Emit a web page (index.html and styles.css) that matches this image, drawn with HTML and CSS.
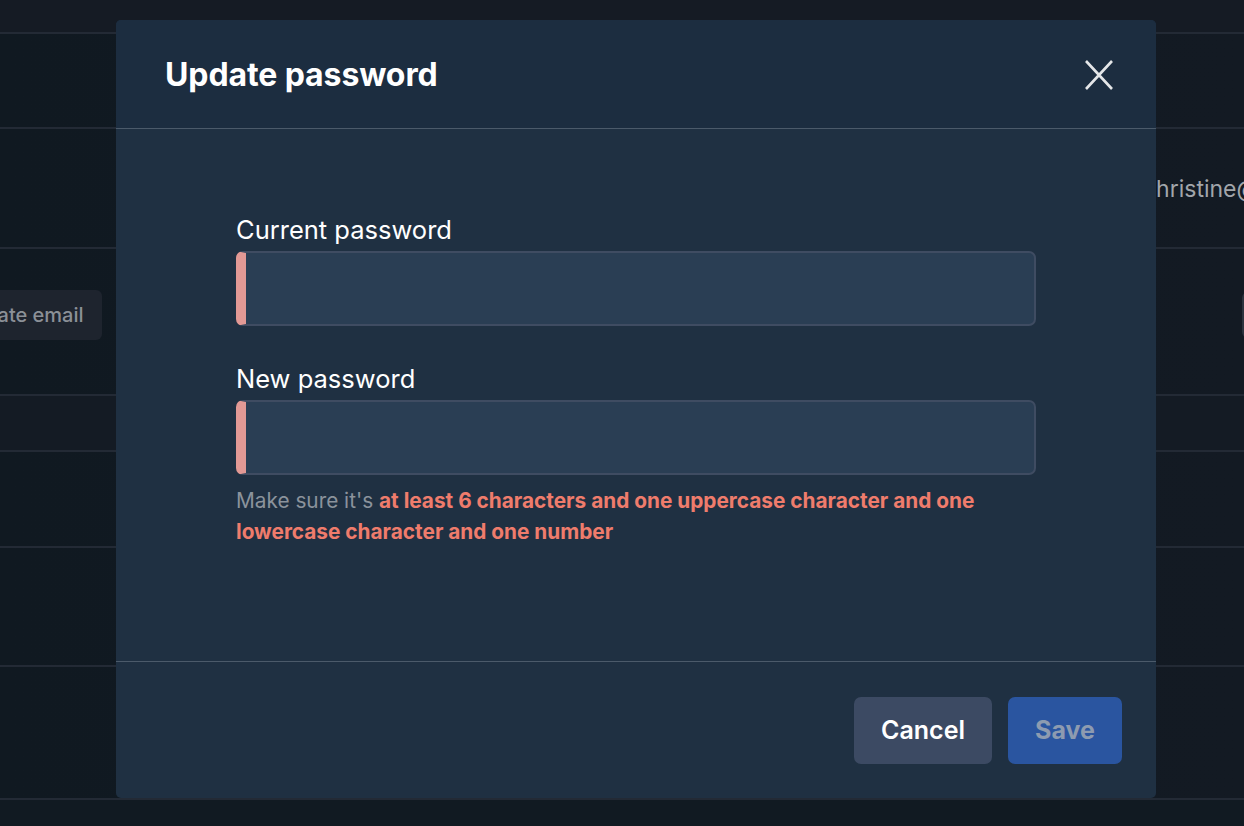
FILE: index.html
```html
<!DOCTYPE html>
<html lang="en">
<head>
    <meta charset="UTF-8">
    <meta name="viewport" content="width=device-width, initial-scale=1.0">
    <title>Update password</title>
    <link rel="stylesheet" href="styles.css">
</head>
<body>
    <div class="page">
        <div class="row row-top"></div>
        <div class="row row-2"></div>
        <div class="row row-3">
            <span class="email-text">christine@example.com</span>
        </div>
        <div class="row row-4">
            <button class="bg-btn">Update email</button>
            <button class="bg-btn-right">Edit</button>
        </div>
        <div class="row row-5"></div>
        <div class="row row-6"></div>
        <div class="row row-7"></div>
        <div class="row row-8"></div>
        <div class="row row-9"></div>
    </div>

    <div class="overlay">
        <div class="modal">
            <div class="modal-header">
                <h2>Update password</h2>
                <button class="close-btn" aria-label="Close">
                    <svg width="30" height="32" viewBox="0 0 30 32">
                        <path d="M2 2 L28 30 M28 2 L2 30" stroke="#e4e6e8" stroke-width="2.6" fill="none"/>
                    </svg>
                </button>
            </div>

            <div class="modal-body">
                <div class="form">
                    <label for="currentPw">Current password</label>
                    <div class="input-wrap">
                        <input type="password" id="currentPw">
                    </div>

                    <label for="newPw" class="second">New password</label>
                    <div class="input-wrap">
                        <input type="password" id="newPw">
                    </div>
                    <p class="hint">Make sure it's <strong>at least 6 characters and one uppercase character and one lowercase character and one number</strong></p>
                </div>
            </div>

            <div class="modal-footer">
                <button class="cancel-btn">Cancel</button>
                <button class="save-btn" disabled>Save</button>
            </div>
        </div>
    </div>
</body>
</html>
```

FILE: styles.css
```css
* {
    margin: 0;
    padding: 0;
    box-sizing: border-box;
}

body {
    font-family: Inter, "Noto Sans", sans-serif;
    background: #111a22;
    height: 826px;
    overflow: hidden;
}

/* background page (dimmed) */
.page {
    display: flex;
    flex-direction: column;
    overflow: hidden;
}

.row {
    border-bottom: 2px solid #232a35;
    background: linear-gradient(90deg, #101921, #131a23);
    display: flex;
    align-items: center;
}

.row-top { height: 34px; background: #151b24; }
.row-2 { height: 95px; }
.row-3 { height: 120px; justify-content: flex-end; }
.row-4 { height: 147px; justify-content: space-between; }
.row-5 { height: 56px; background: #141b24; }
.row-6 { height: 96px; }
.row-7 { height: 119px; }
.row-8 { height: 133px; }
.row-9 { flex: 1; border-bottom: none; background: #121921; }

.email-text {
    color: #a2a6ab;
    font-size: 23px;
    white-space: nowrap;
    margin-right: -160px;
    margin-top: 2px;
}

.bg-btn {
    font-family: inherit;
    font-size: 20px;
    font-weight: 500;
    color: #8b9097;
    background: #1e242e;
    border: none;
    border-radius: 6px;
    height: 50px;
    padding: 0 18px;
    margin-left: -60px;
    margin-bottom: 14px;
}

.bg-btn-right {
    width: 40px;
    height: 46px;
    margin-right: -38px;
    margin-bottom: 14px;
    background: #1c222b;
    border: 2px solid #2c333e;
    border-radius: 6px;
    color: transparent;
}

/* modal */
.overlay {
    position: fixed;
    inset: 0;
    padding: 20px 0 0 116px;
}

.modal {
    width: 1040px;
    background: #1f3042;
    border-radius: 5px;
    overflow: hidden;
}

.modal-header {
    height: 109px;
    background: #1c2d40;
    border-bottom: 1px solid #4b5a6a;
    display: flex;
    align-items: center;
    justify-content: space-between;
    padding: 0 42px 0 49px;
}

.modal-header h2 {
    color: #fff;
    font-size: 32px;
    font-weight: 700;
    letter-spacing: -0.1px;
}

.close-btn {
    background: none;
    border: none;
    width: 30px;
    height: 32px;
    margin-top: 2px;
}

.modal-body {
    height: 533px;
    border-bottom: 1px solid #4b5a6a;
    display: flex;
    justify-content: center;
    padding-top: 83px;
}

.form {
    width: 800px;
}

.form label {
    display: block;
    color: #fff;
    font-size: 25.5px;
    line-height: 36px;
    margin-bottom: 3px;
}

.form label.second {
    margin-top: 35px;
}

.input-wrap {
    height: 75px;
    border: 2px solid #3f4c62;
    border-left: 10px solid #e29995;
    border-radius: 7px;
    background: #2a3e54;
}

.input-wrap input {
    width: 100%;
    height: 100%;
    background: transparent;
    border: none;
    outline: none;
    color: #fff;
    font-size: 20px;
    padding: 0 16px;
}

.hint {
    margin-top: 10px;
    color: #8b939c;
    font-size: 20.8px;
    line-height: 31px;
    padding-right: 40px;
}

.hint strong {
    color: #ef7c6c;
    font-weight: 700;
}

.modal-footer {
    height: 136px;
    display: flex;
    justify-content: flex-end;
    align-items: center;
    gap: 16px;
    padding: 0 34px 0 0;
}

.modal-footer button {
    font-family: inherit;
    height: 67px;
    border: none;
    border-radius: 7px;
    font-size: 25px;
    font-weight: 600;
}

.cancel-btn {
    width: 138px;
    background: #3c4a63;
    color: #fff;
}

.save-btn {
    width: 114px;
    background: #2a55a0;
    color: #8d9bb0;
    font-weight: 700 !important;
}
```
